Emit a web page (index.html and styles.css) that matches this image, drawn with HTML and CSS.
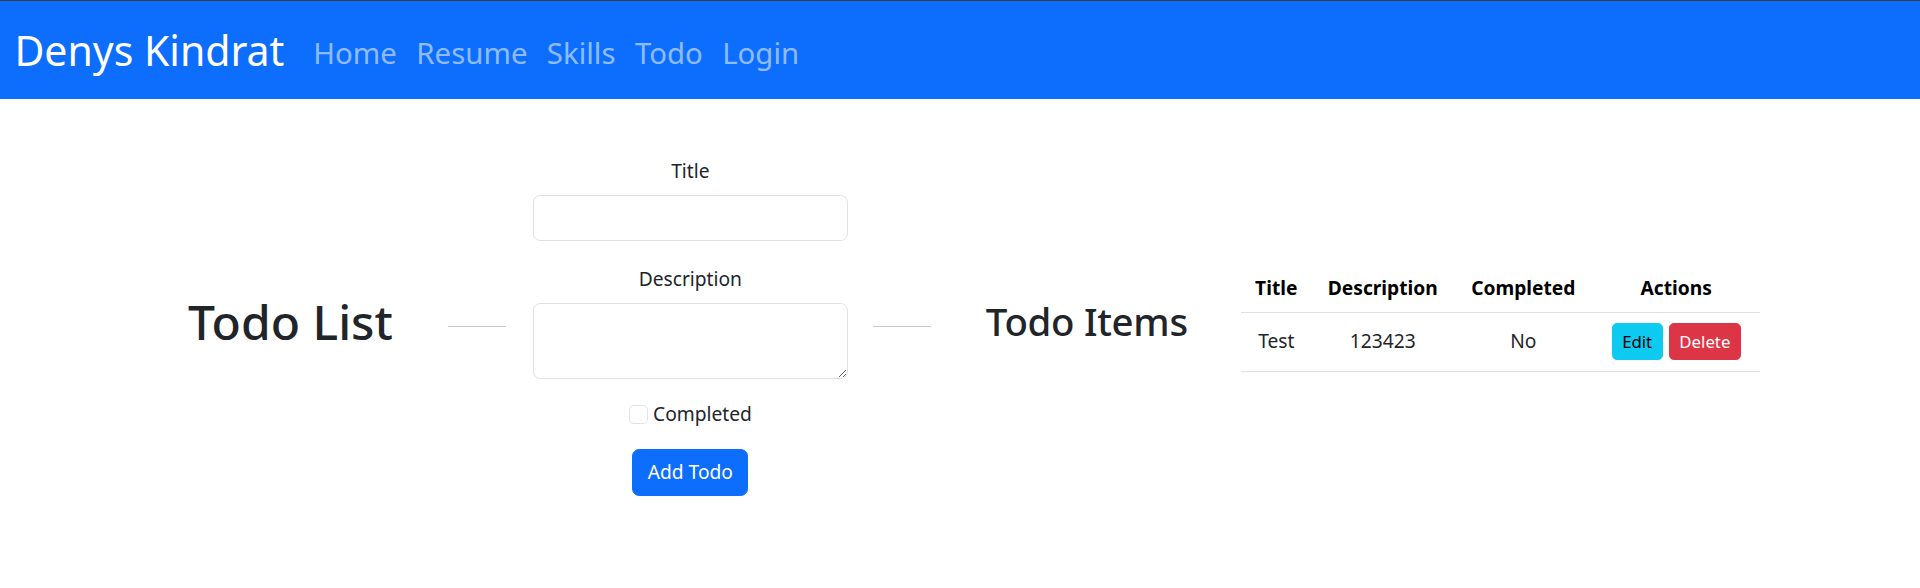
FILE: index.html
```html
<!DOCTYPE html>
<html lang="en">
<head>
<meta charset="utf-8">
<title>Todo</title>
<link rel="stylesheet" href="styles.css">
</head>
<body>
<nav class="navbar">
  <a class="brand" href="#">Denys Kindrat</a>
  <ul class="nav">
    <li><a class="nav-link" href="#">Home</a></li>
    <li><a class="nav-link" href="#">Resume</a></li>
    <li><a class="nav-link" href="#">Skills</a></li>
    <li><a class="nav-link" href="#">Todo</a></li>
    <li><a class="nav-link" href="#">Login</a></li>
  </ul>
</nav>
<main class="content">
  <h1 class="heading-main">Todo List</h1>
  <hr class="sep sep-left">
  <form class="todo-form">
    <label class="form-label" for="title">Title</label>
    <input class="field" id="title" type="text">
    <label class="form-label" for="desc">Description</label>
    <textarea class="field area" id="desc"></textarea>
    <div class="check">
      <input class="check-input" type="checkbox" id="done">
      <label class="check-label" for="done">Completed</label>
    </div>
    <button class="btn btn-primary" type="button">Add Todo</button>
  </form>
  <hr class="sep sep-right">
  <h2 class="heading-items">Todo Items</h2>
  <table class="table">
    <colgroup>
      <col class="c-title"><col class="c-desc"><col class="c-done"><col class="c-act">
    </colgroup>
    <thead>
      <tr><th>Title</th><th>Description</th><th>Completed</th><th>Actions</th></tr>
    </thead>
    <tbody>
      <tr>
        <td>Test</td>
        <td>123423</td>
        <td>No</td>
        <td><button class="btn-sm btn-info" type="button">Edit</button><button class="btn-sm btn-danger" type="button">Delete</button></td>
      </tr>
    </tbody>
  </table>
</main>
</body>
</html>
```

FILE: styles.css
```css
* { box-sizing: border-box; }

body {
  margin: 0;
  font-family: "Noto Sans", "Open Sans", sans-serif;
  font-size: 19.2px;
  line-height: 1.5;
  color: #212529;
  background: #fff;
}

.navbar {
  display: flex;
  align-items: center;
  height: 99px;
  border-top: 1px solid #3b3b3b;
  background: #0d6efd;
  padding: 2px 14.4px 0;
}

.brand {
  font-size: 41px;
  line-height: 1.5;
  color: #fff;
  text-decoration: none;
  margin-right: 19.2px;
}

.nav {
  display: flex;
  list-style: none;
  margin: 0;
  padding: 0;
}

.nav-link {
  display: block;
  padding: 12px 9.7px 8px;
  font-size: 29.4px;
  line-height: 1.5;
  color: rgba(255, 255, 255, 0.55);
  text-decoration: none;
}

.content {
  display: flex;
  align-items: center;
  padding: 57.6px 0 0 188px;
}

.heading-main {
  margin: 0 0 10px;
  font-size: 48px;
  font-weight: 500;
  line-height: 1.2;
}

.heading-items {
  margin: 0 53px 10px 0;
  font-size: 38.4px;
  font-weight: 500;
  line-height: 1.2;
  letter-spacing: -0.3px;
}

.sep {
  width: 58px;
  margin: 0;
  border: 0;
  border-top: 1px solid #212529;
  opacity: 0.25;
}

.sep-left { margin: 0 27px 0 55px; }
.sep-right { margin: 0 55px 0 25px; }

.todo-form {
  width: 315px;
  display: flex;
  flex-direction: column;
  align-items: stretch;
  text-align: center;
}

.form-label {
  display: block;
  margin-bottom: 9.6px;
}

.field {
  display: block;
  width: 100%;
  height: 46px;
  margin: 0 0 24px;
  padding: 7.2px 14.4px;
  font: inherit;
  color: #212529;
  background: #fff;
  border: 1px solid #dee2e6;
  border-radius: 7.2px;
}

.area {
  height: 76px;
  resize: vertical;
  margin-bottom: 21px;
}

.check {
  display: flex;
  justify-content: center;
  align-items: flex-start;
  gap: 5px;
  margin-bottom: 20px;
}

.check-input {
  appearance: none;
  -webkit-appearance: none;
  width: 19.2px;
  height: 19.2px;
  margin: 4.8px 0 0;
  border: 1px solid #dee2e6;
  border-radius: 4.8px;
  background: #fff;
}

.btn {
  align-self: center;
  height: 47px;
  padding: 0 14.4px;
  font: inherit;
  line-height: 1.5;
  border: 1px solid transparent;
  border-radius: 7.2px;
  cursor: pointer;
}

.btn-primary {
  color: #fff;
  background: #0d6efd;
  border-color: #0d6efd;
}

.table {
  width: 519px;
  margin-bottom: 17px;
  border-collapse: collapse;
  table-layout: fixed;
}

.c-title { width: 71px; }
.c-desc { width: 142px; }
.c-done { width: 139px; }
.c-act { width: 167px; }

.table th,
.table td {
  padding: 9.6px;
  text-align: center;
  vertical-align: middle;
  border-bottom: 1px solid #dee2e6;
  white-space: nowrap;
}

.table td {
  padding: 10.4px 9.6px;
}

.table th {
  font-weight: 700;
  color: #000;
}

.btn-sm {
  height: 37px;
  padding: 0 9.6px;
  font-family: inherit;
  font-size: 16.8px;
  line-height: 1.5;
  vertical-align: middle;
  border: 1px solid transparent;
  border-radius: 4.8px;
  cursor: pointer;
}

.btn-info {
  color: #000;
  background: #0dcaf0;
  border-color: #0dcaf0;
  margin-right: 6px;
}

.btn-danger {
  color: #fff;
  background: #dc3545;
  border-color: #dc3545;
}
```
